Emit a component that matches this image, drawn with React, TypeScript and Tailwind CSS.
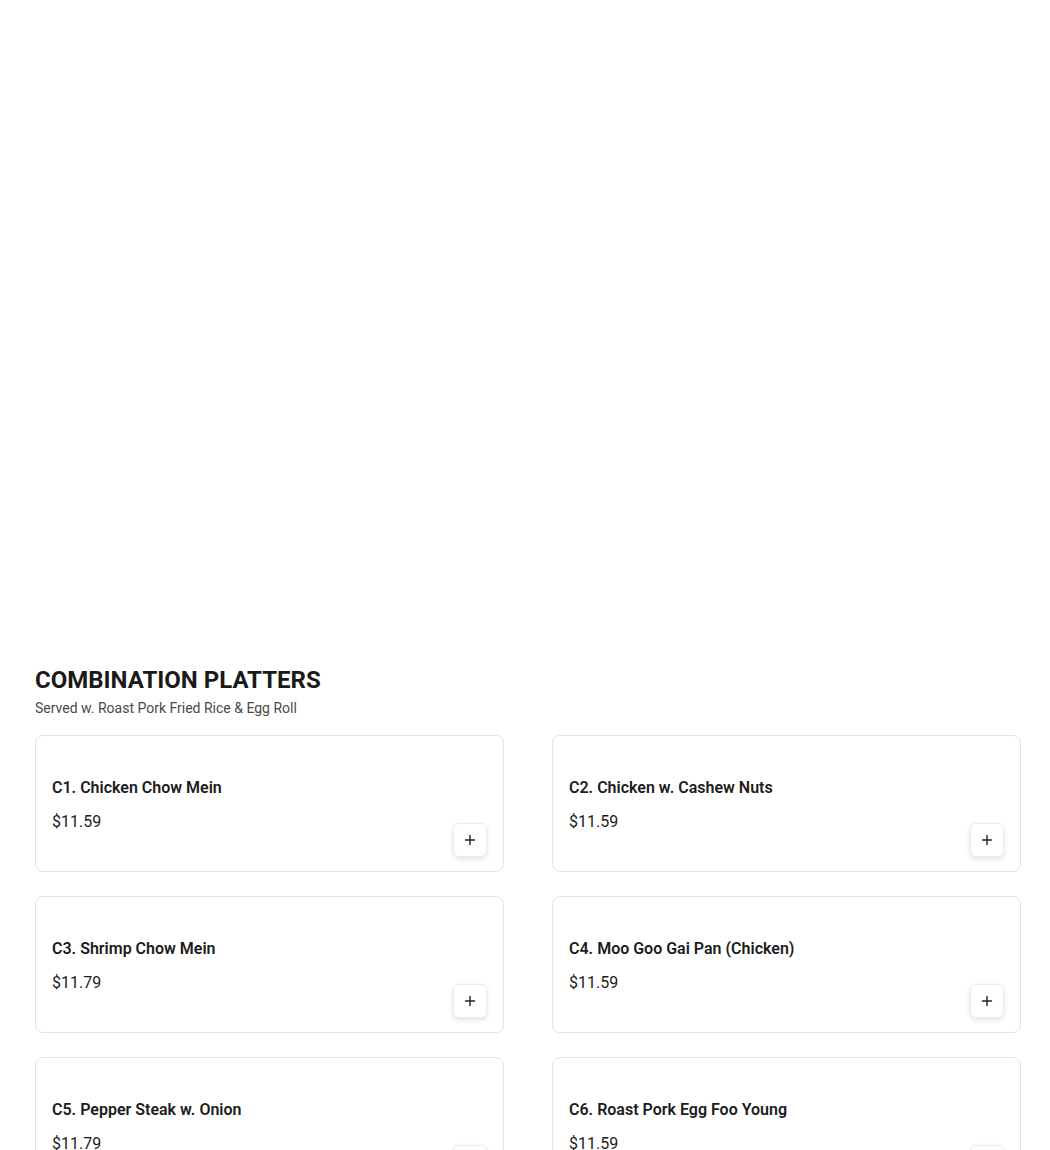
import * as React from "react";

const items = [
  { name: "C1. Chicken Chow Mein", price: "$11.59" },
  { name: "C2. Chicken w. Cashew Nuts", price: "$11.59" },
  { name: "C3. Shrimp Chow Mein", price: "$11.79" },
  { name: "C4. Moo Goo Gai Pan (Chicken)", price: "$11.59" },
  { name: "C5. Pepper Steak w. Onion", price: "$11.79" },
  { name: "C6. Roast Pork Egg Foo Young", price: "$11.59" },
  { name: "C7. Shrimp w. Lobster Sauce", price: "$11.79" },
  { name: "C8. Sweet & Sour Chicken", price: "$11.59" },
];

function PlusIcon() {
  return (
    <svg width="12" height="12" viewBox="0 0 12 12" fill="none" aria-hidden>
      <path d="M6 1.5v9M1.5 6h9" stroke="#222" strokeWidth="1.4" strokeLinecap="round" />
    </svg>
  );
}

function ItemCard({ name, price }: { name: string; price: string }) {
  return (
    <div className="flex h-[137px] rounded-lg border border-[#e3e3e3] bg-white pl-4 pr-4 pb-[14px]">
      <div className="flex-1 pt-[40px]">
        <div className="text-base leading-6 font-semibold text-[#1c1c1c]">{name}</div>
        <div className="mt-[10px] text-base leading-6 text-[#1c1c1c]">{price}</div>
      </div>
      <button className="self-end flex h-[34px] w-[34px] items-center justify-center rounded-md border border-[#ececec] bg-white shadow-[0_2px_5px_rgba(0,0,0,0.12)]">
        <PlusIcon />
      </button>
    </div>
  );
}

export default function App() {
  return (
    <div className="min-h-screen bg-white pl-[35px] pr-[29px] pt-[664px] pb-10" style={{ fontFamily: "Roboto, 'Noto Sans', sans-serif" }}>
      <h2 className="text-2xl leading-8 font-bold uppercase text-[#1a1a1a]">Combination Platters</h2>
      <p className="mt-[2px] text-sm leading-5 text-[#4a4a4a]">Served w. Roast Pork Fried Rice &amp; Egg Roll</p>
      <div className="mt-[17px] grid grid-cols-2 gap-x-[48px] gap-y-[24px]">
        {items.map((it) => (
          <ItemCard key={it.name} name={it.name} price={it.price} />
        ))}
      </div>
    </div>
  );
}
